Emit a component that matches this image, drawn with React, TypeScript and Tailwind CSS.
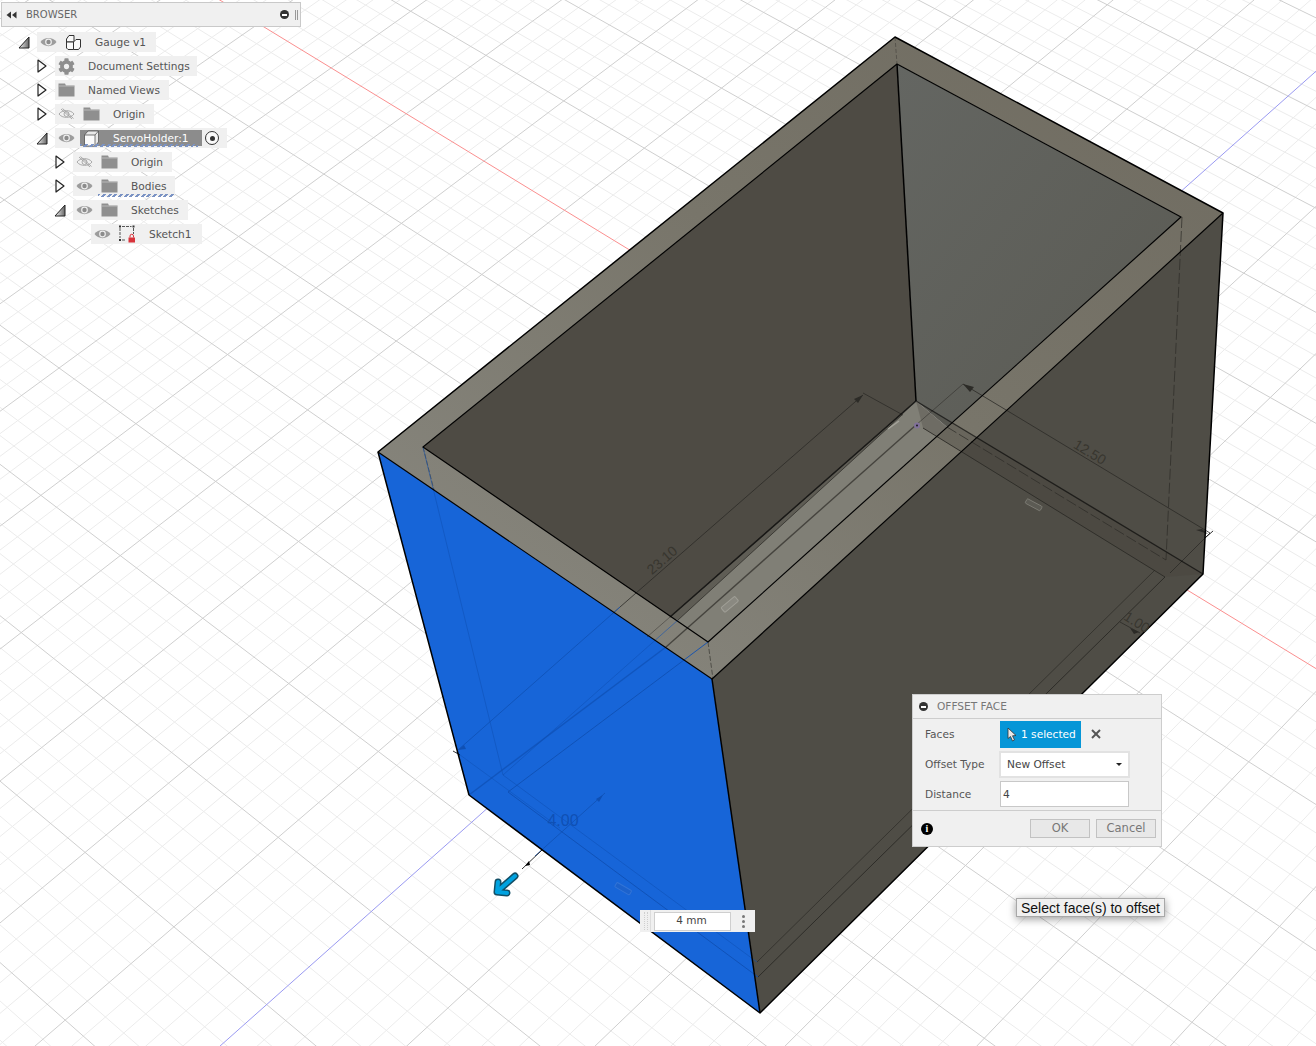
import React from "react";
import { FaCog } from "react-icons/fa";

// ground plane grid: homography fitted on the viewport (origin at the sketch origin)
const project = (s: number, t: number) => {
  const w = 1 - 0.0193 * s - 0.0185 * t;
  return {
    x: 917.6 + (95.1 * s - 80.95 * t) / w,
    y: 425.6 + (58 * s + 72 * t) / w,
  };
};

const RANGE = 14;
const gridLines = Array.from({ length: RANGE * 10 + 1 }, (_, n) => n - RANGE * 5);

const GroundGrid = () => (
  <g fill="none">
    {gridLines.filter((i) => i % 5 !== 0).map((i) => {
      const a = project(i / 5, -RANGE);
      const b = project(i / 5, RANGE);
      const c = project(-RANGE, i / 5);
      const d = project(RANGE, i / 5);
      return (
        <g key={i} stroke="#ececec" strokeWidth="1">
          <line x1={a.x} y1={a.y} x2={b.x} y2={b.y} />
          <line x1={c.x} y1={c.y} x2={d.x} y2={d.y} />
        </g>
      );
    })}
    {gridLines.filter((i) => i % 5 === 0 && i !== 0).map((i) => {
      const a = project(i / 5, -RANGE);
      const b = project(i / 5, RANGE);
      const c = project(-RANGE, i / 5);
      const d = project(RANGE, i / 5);
      return (
        <g key={i} stroke="#cfcfcf" strokeWidth="1">
          <line x1={a.x} y1={a.y} x2={b.x} y2={b.y} />
          <line x1={c.x} y1={c.y} x2={d.x} y2={d.y} />
        </g>
      );
    })}
    <line x1={project(-RANGE, 0).x} y1={project(-RANGE, 0).y} x2={project(RANGE, 0).x} y2={project(RANGE, 0).y} stroke="#fb8f8f" />
    <line x1={project(0, -RANGE).x} y1={project(0, -RANGE).y} x2={project(0, RANGE).x} y2={project(0, RANGE).y} stroke="#9a9af2" />
  </g>
);

const HolderModel = () => (
  <g>
    <defs>
      <linearGradient id="rim" x1="1" y1="0" x2="0" y2="1">
        <stop offset="0" stopColor="#6f6b60" />
        <stop offset="0.45" stopColor="#78756a" />
        <stop offset="1" stopColor="#8a8981" />
      </linearGradient>
      <linearGradient id="backWall" x1="0" y1="0" x2="1" y2="1">
        <stop offset="0" stopColor="#646662" />
        <stop offset="1" stopColor="#5a5a53" />
      </linearGradient>
    </defs>

    {/* outer faces */}
    <polygon points="712,679 1223,213 1203,574 760,1013" fill="#4f4d46" />
    <polygon points="378,452 712,679 760,1013 469,795" fill="#1765d8" />

    {/* inside of the box */}
    <polygon points="423,447 897,64 916,401 670,617" fill="#4e4b44" />
    <polygon points="897,64 1181,217 947,427 916,401" fill="url(#backWall)" />
    <polygon points="670,617 916,401 947,427 708,642" fill="#807f76" />
    <polygon points="670,617 678,620 902,415 916,401" fill="#5f5d55" />

    {/* rim */}
    <path d="M378,452 L895,37 L1223,213 L712,679 Z M423,447 L708,642 L1181,217 L897,64 Z" fill="url(#rim)" fillRule="evenodd" />

    {/* translucent strip of the far wall bottom */}
    <polygon points="916,401 1203,574 1165,577 923,428" fill="#45433c" fillOpacity="0.3" />

    {/* sketch and hidden edges on the right */}
    <g fill="none" stroke="#2c2b27" strokeWidth="1">
      <line x1="923" y1="428" x2="1165" y2="577" strokeOpacity="0.9" />
      <line x1="1165" y1="577" x2="758" y2="977" strokeOpacity="0.95" />
      <line x1="1155" y1="570" x2="757" y2="962" strokeOpacity="0.7" />
      <line x1="947" y1="427" x2="1166" y2="560" strokeDasharray="11 3" strokeOpacity="0.7" />
      <line x1="1182" y1="217" x2="1166" y2="560" strokeDasharray="11 3" strokeOpacity="0.7" />
      <line x1="895" y1="37" x2="897" y2="64" strokeDasharray="4 2" strokeOpacity="0.4" />
      <line x1="708" y1="642" x2="713" y2="679" strokeDasharray="5 2" strokeOpacity="0.6" />
      <line x1="423" y1="447" x2="434" y2="490" strokeDasharray="5 2" strokeOpacity="0.5" />
      <line x1="678" y1="620" x2="902" y2="415" strokeOpacity="0.75" />
      <line x1="666" y1="647" x2="916" y2="425" strokeOpacity="0.7" strokeWidth="1.4" />
      <line x1="647" y1="637" x2="670" y2="617" strokeOpacity="0.45" />
      <line x1="863" y1="395" x2="620" y2="607" strokeWidth="0.8" />
      <line x1="863" y1="393" x2="903" y2="415" strokeWidth="0.8" />
      <line x1="963" y1="384" x2="1210" y2="533" strokeWidth="0.8" />
      <line x1="963" y1="384" x2="916" y2="425" strokeWidth="0.8" strokeOpacity="0.7" />
      <line x1="1210" y1="533" x2="1170" y2="573" strokeWidth="0.8" />
      <line x1="1120" y1="622" x2="1140" y2="633" strokeWidth="0.8" />
      <line x1="620" y1="607" x2="612" y2="614" strokeWidth="0.8" strokeOpacity="0.5" />
    </g>
    <polygon points="863,395 854,399 858,403" fill="#2c2b27" />
    <polygon points="963,384 970,392 974,387" fill="#2c2b27" />
    <polygon points="1202,529 1208,534 1196,530" fill="#2c2b27" />
    <polygon points="1130,628 1139,632 1134,634" fill="#2c2b27" />

    {/* see-through lines on the selected face */}
    <g fill="none" stroke="#0f50b4" strokeWidth="1">
      <line x1="423" y1="447" x2="503" y2="775" strokeOpacity="0.55" />
      <line x1="503" y1="775" x2="757" y2="962" strokeOpacity="0.55" />
      <line x1="508" y1="792" x2="758" y2="977" strokeOpacity="0.9" />
      <line x1="469" y1="795" x2="666" y2="647" strokeWidth="1.4" strokeOpacity="0.75" />
      <line x1="503" y1="775" x2="678" y2="620" strokeOpacity="0.55" />
      <line x1="508" y1="792" x2="708" y2="642" strokeOpacity="0.9" />
      <line x1="620" y1="607" x2="458" y2="750" strokeWidth="0.8" />
      <line x1="456" y1="752" x2="560" y2="828" strokeWidth="0.8" strokeOpacity="0.6" />
      <line x1="605" y1="793" x2="535" y2="856" strokeWidth="0.8" />
    </g>
    <polygon points="458,750 464,745 466,749" fill="#0f50b4" />
    <polygon points="603,795 596,799 599,802" fill="#0f50b4" />

    {/* main edges */}
    <g fill="none" stroke="#000" strokeWidth="1.2" strokeLinejoin="round">
      <polyline points="469,795 378,452 895,37 1223,213 1203,574 760,1013 469,795" strokeWidth="1.5" />
      <polyline points="378,452 712,679 1223,213" />
      <line x1="712" y1="679" x2="760" y2="1013" strokeWidth="1.5" />
      <polygon points="423,447 708,642 1181,217 897,64" />
      <line x1="897" y1="64" x2="916" y2="401" strokeWidth="1.5" />
      <line x1="916" y1="401" x2="670" y2="617" strokeOpacity="0.8" strokeWidth="1.4" />
      <line x1="916" y1="401" x2="1203" y2="574" strokeOpacity="0.6" strokeWidth="1.4" />
    </g>

    {/* dimension stub and tick outside the body */}
    <line x1="522" y1="869" x2="542" y2="850" stroke="#000" strokeWidth="0.8" />
    <polygon points="529,861 525,866 530,865" fill="#000" />
    <line x1="453" y1="751" x2="460" y2="755" stroke="#000" strokeWidth="0.8" />
    <line x1="1205" y1="538" x2="1213" y2="531" stroke="#000" strokeWidth="0.8" />

    {/* constraint glyphs */}
    <rect x="721" y="602" width="18" height="6" rx="1" transform="rotate(-40 729 605)" fill="#8a8981" stroke="#a09f97" />
    <rect x="1025" y="502" width="17" height="5" rx="1" transform="rotate(28 1033 505)" fill="#5c5b54" stroke="#807f77" strokeWidth="0.8" />
    <rect x="615" y="886" width="17" height="5" rx="1" transform="rotate(30 623 888)" fill="#1c62cc" stroke="#3374d6" />
    <line x1="888" y1="429" x2="899" y2="421" stroke="#a5a49c" strokeWidth="1.5" />
    <circle cx="917" cy="425.5" r="3" fill="#80709a" />
    <circle cx="917" cy="425.5" r="1" fill="#1c1c22" />

    {/* offset arrow */}
    <g fill="none" strokeLinecap="round" strokeLinejoin="round">
      <path d="M515,876 L500,889 M498,882 L497,892 L507,893" stroke="#134f66" strokeWidth="7" />
      <path d="M515,876 L500,889 M498,882 L497,892 L507,893" stroke="#00a2e0" strokeWidth="4" />
    </g>

    <g fontFamily="'Liberation Sans', sans-serif" fontSize="14">
      <text x="662" y="565" textAnchor="middle" fill="#38362f" transform="rotate(-41 662 560)">23.10</text>
      <text x="1090" y="457" textAnchor="middle" fill="#38362f" transform="rotate(31 1090 452)">12.50</text>
      <text x="1137" y="627" textAnchor="middle" fill="#38362f" transform="rotate(32 1137 622)">1.00</text>
      <text x="563" y="826" textAnchor="middle" fill="#0f50b4" fontSize="16">4.00</text>
    </g>
  </g>
);

const Triangle = ({ open }: { open?: boolean }) => (
  <svg width="12" height="14" viewBox="0 0 12 14" className="shrink-0">
    <defs>
      <linearGradient id="corner" x1="0" y1="0" x2="1" y2="0">
        <stop offset="0" stopColor="#f2f2f2" />
        <stop offset="1" stopColor="#666" />
      </linearGradient>
    </defs>
    {open ? (
      <polygon points="1,13 11,2 11,13" fill="url(#corner)" stroke="#222" strokeWidth="1" />
    ) : (
      <polygon points="2,1 10,7 2,13" fill="#fafafa" stroke="#222" strokeWidth="1.2" strokeLinejoin="round" />
    )}
  </svg>
);

const Eye = ({ off }: { off?: boolean }) =>
  off ? (
    <svg width="17" height="12" viewBox="0 0 17 12" fill="none" stroke="#a2a2a2" strokeWidth="0.9">
      <path d="M1,6 C4,1.5 13,1.5 16,6 C13,10.5 4,10.5 1,6 Z" />
      <circle cx="8.5" cy="6" r="2.5" />
      <line x1="3" y1="1" x2="14" y2="11" />
      <line x1="4.5" y1="0.5" x2="15.5" y2="10.5" />
    </svg>
  ) : (
    <svg width="17" height="12" viewBox="0 0 17 12">
      <path d="M0.5,6 C4,0.5 13,0.5 16.5,6 C13,11.5 4,11.5 0.5,6 Z" fill="#9c9c9c" />
      <circle cx="8.5" cy="6" r="3.4" fill="#eee" />
      <circle cx="8.5" cy="6" r="2.2" fill="#8c8c8c" />
    </svg>
  );

const Folder = () => (
  <svg width="17" height="14" viewBox="0 0 17 14">
    <path d="M0.5,0.5 H7 L8,2.5 H16.5 V13.5 H0.5 Z" fill="#8f8f8f" />
    <line x1="0.5" y1="3" x2="16.5" y2="3" stroke="#c4c4c4" strokeWidth="0.8" />
  </svg>
);

const ComponentIcon = () => (
  <svg width="17" height="17" viewBox="0 0 17 17" fill="#fafafa" stroke="#333" strokeWidth="1" strokeLinejoin="round">
    <path d="M1.5,5 L4,1.5 H9 V8 H1.5 Z" />
    <path d="M1.5,8 H8.5 V15.5 H3 L1.5,14 Z" />
    <path d="M8.5,8 L11,5.5 H15.5 V13 L13.5,15.5 H8.5 Z" />
  </svg>
);

const CubeIcon = () => (
  <svg width="17" height="17" viewBox="0 0 17 17" stroke="#555" strokeWidth="0.8" strokeLinejoin="round">
    <path d="M1.5,5 L5,1 H15.5 V12 L12,16 H1.5 Z" fill="#e8e8e8" />
    <path d="M1.5,5 H12 V16 H1.5 Z" fill="#fafafa" />
    <path d="M12,5 L15.5,1" fill="none" />
  </svg>
);

const SketchIcon = () => (
  <svg width="18" height="18" viewBox="0 0 18 18" fill="none">
    <path d="M2,3 V13 M4,1.5 H13.5 M15.5,3 V9 M4,15 H8" stroke="#555" strokeWidth="1" strokeDasharray="3 1" />
    <rect x="1" y="0.5" width="2" height="2" fill="#333" />
    <rect x="14.5" y="0.5" width="2" height="2" fill="#333" />
    <rect x="1" y="14" width="2" height="2" fill="#333" />
    <rect x="10.5" y="12.5" width="6.5" height="5" fill="#d8333b" />
    <path d="M12,12.5 V11 A1.7,1.7 0 0 1 15.5,11 V12.5" stroke="#d8333b" strokeWidth="1" />
  </svg>
);

const Chip = ({ children, className }: { children: React.ReactNode; className: string }) => (
  <div className={`flex h-5 items-center bg-[#f0f0f0] ${className}`}>{children}</div>
);

const Slot = ({ children }: { children: React.ReactNode }) => (
  <span className="flex w-[22px] shrink-0 items-center justify-center">{children}</span>
);

const TreeRow = ({ indent, tri, chip, children }: { indent: string; tri?: "open" | "closed"; chip: string; children: React.ReactNode }) => (
  <div className={`relative flex h-6 items-center ${indent}`}>
    <span className="flex w-[19px] shrink-0 items-center justify-start">
      {tri && <Triangle open={tri === "open"} />}
    </span>
    <Chip className={chip}>{children}</Chip>
  </div>
);

const Label = ({ children, className = "ml-[11px] text-[#555]" }: { children: React.ReactNode; className?: string }) => (
  <span className={`${className} whitespace-nowrap text-[10.6px] leading-none`}>{children}</span>
);

const Squiggle = ({ className }: { className: string }) => (
  <span className={`absolute h-[3px] bg-[repeating-linear-gradient(135deg,#7b93c4_0,#7b93c4_2px,transparent_2px,transparent_4px)] ${className}`} />
);

const BrowserPanel = () => (
  <div className="absolute left-[1px] top-[2px] w-[300px] font-['DejaVu_Sans',sans-serif]">
    <div className="flex h-[25px] items-center border border-[#c9c9c9] bg-[#f0f0f0] pl-[4px] pr-[2px]">
      <svg width="11" height="8" viewBox="0 0 11 8" fill="#333">
        <polygon points="5,0.5 5,7.5 0.5,4" />
        <polygon points="10.5,0.5 10.5,7.5 6,4" />
      </svg>
      <span className="ml-[9px] text-[10px] leading-none text-[#666]">BROWSER</span>
      <span className="ml-auto flex h-[9px] w-[9px] items-center justify-center rounded-full bg-[#333]">
        <span className="h-[2px] w-[5px] bg-white" />
      </span>
      <span className="ml-[6px] h-[10px] w-[3px] border-x border-[#999]" />
    </div>
    <div className="-ml-[1px] mt-[3px] flex flex-col">
      <TreeRow indent="pl-[18px]" tri="open" chip="w-[119px]">
        <Slot><Eye /></Slot>
        <span className="ml-[3px]" />
        <Slot><ComponentIcon /></Slot>
        <Label>Gauge v1</Label>
      </TreeRow>
      <TreeRow indent="pl-[36px]" tri="closed" chip="w-[142px]">
        <Slot><FaCog className="h-[17px] w-[17px] text-[#8e8e8e]" /></Slot>
        <Label>Document Settings</Label>
      </TreeRow>
      <TreeRow indent="pl-[36px]" tri="closed" chip="w-[114px]">
        <Slot><Folder /></Slot>
        <Label>Named Views</Label>
      </TreeRow>
      <TreeRow indent="pl-[36px]" tri="closed" chip="w-[99px]">
        <Slot><Eye off /></Slot>
        <span className="ml-[3px]" />
        <Slot><Folder /></Slot>
        <Label>Origin</Label>
      </TreeRow>
      <TreeRow indent="pl-[36px]" tri="open" chip="w-[172px]">
        <Slot><Eye /></Slot>
        <span className="ml-[3px]" />
        <div className="relative flex h-4 w-[122px] shrink-0 items-center bg-[#8c8c8c]">
          <Slot><CubeIcon /></Slot>
          <Label className="ml-[11px] text-white">ServoHolder:1</Label>
          <Squiggle className="-bottom-[1px] left-0 w-[118px]" />
        </div>
        <span className="ml-[3px] flex h-[14px] w-[14px] items-center justify-center rounded-full border border-[#333] bg-[#fafafa]">
          <span className="h-[5px] w-[5px] rounded-full bg-[#333]" />
        </span>
      </TreeRow>
      <TreeRow indent="pl-[54px]" tri="closed" chip="w-[99px]">
        <Slot><Eye off /></Slot>
        <span className="ml-[3px]" />
        <Slot><Folder /></Slot>
        <Label>Origin</Label>
      </TreeRow>
      <TreeRow indent="pl-[54px]" tri="closed" chip="w-[102px]">
        <Slot><Eye /></Slot>
        <span className="ml-[3px]" />
        <Slot><Folder /></Slot>
        <Label>Bodies</Label>
        <Squiggle className="bottom-[1px] left-[98px] w-[76px]" />
      </TreeRow>
      <TreeRow indent="pl-[54px]" tri="open" chip="w-[115px]">
        <Slot><Eye /></Slot>
        <span className="ml-[3px]" />
        <Slot><Folder /></Slot>
        <Label>Sketches</Label>
      </TreeRow>
      <TreeRow indent="pl-[72px]" chip="w-[111px]">
        <Slot><Eye /></Slot>
        <span className="ml-[3px]" />
        <Slot><SketchIcon /></Slot>
        <Label>Sketch1</Label>
      </TreeRow>
    </div>
  </div>
);

const OffsetFaceDialog = () => (
  <div className="absolute left-[912px] top-[694px] w-[250px] border border-[#cdcdcd] bg-[#f0f0f0] font-['DejaVu_Sans',sans-serif] text-[10.6px] leading-none text-[#555]">
    <div className="flex h-[24px] items-center border-b border-[#cdcdcd] pl-[6px]">
      <span className="flex h-[9px] w-[9px] items-center justify-center rounded-full bg-[#333]">
        <span className="h-[2px] w-[5px] bg-white" />
      </span>
      <span className="ml-[9px] text-[#777]">OFFSET FACE</span>
    </div>
    <div className="flex h-[91px] flex-col pl-[12px] pt-[1px]">
      <div className="flex h-[28px] items-center">
        <span className="w-[75px]">Faces</span>
        <div className="flex h-[27px] w-[81px] items-center bg-[#0696d7] pl-[7px] text-white">
          <svg width="10" height="15" viewBox="0 0 10 15">
            <path d="M1,1 L1,11.5 L3.5,9.5 L5.5,14 L7.5,13 L5.5,8.8 L9,8.5 Z" fill="#e8e8e8" stroke="#333" strokeWidth="0.8" />
          </svg>
          <span className="ml-[4px]">1 selected</span>
        </div>
        <svg width="10" height="10" viewBox="0 0 10 10" className="ml-[10px]" stroke="#555" strokeWidth="2">
          <line x1="1" y1="1" x2="9" y2="9" />
          <line x1="9" y1="1" x2="1" y2="9" />
        </svg>
      </div>
      <div className="mt-[2px] flex h-[28px] items-center">
        <span className="w-[74px]">Offset Type</span>
        <div className="flex h-[27px] w-[131px] items-center border-2 border-[#e2e2e2] bg-white pl-[6px] pr-[6px]">
          <span className="text-[#444]">New Offset</span>
          <span className="ml-auto h-0 w-0 border-x-[3px] border-t-[3px] border-x-transparent border-t-[#222]" />
        </div>
      </div>
      <div className="mt-[2px] flex h-[28px] items-center">
        <span className="w-[75px]">Distance</span>
        <div className="flex h-[26px] w-[129px] items-center border border-[#c8c8c8] bg-white pl-[2px] text-[#444]">4</div>
      </div>
    </div>
    <div className="flex h-[36px] items-center border-t border-[#cdcdcd] pl-[8px] pr-[5px]">
      <span className="flex h-3 w-3 items-center justify-center rounded-full bg-black font-['Liberation_Serif',serif] text-[10px] font-bold text-white">i</span>
      <button className="ml-auto h-[19px] w-[60px] border border-[#c2c2c2] bg-[#e8e8e8] text-[11.5px] text-[#777]">OK</button>
      <button className="ml-[6px] h-[19px] w-[60px] border border-[#c2c2c2] bg-[#e8e8e8] text-[11.5px] text-[#777]">Cancel</button>
    </div>
  </div>
);

const ValueInput = () => (
  <div className="absolute left-[640px] top-[910px] flex h-[22px] w-[115px] items-center bg-[#f0f0f0] font-['DejaVu_Sans',sans-serif]">
    <span className="ml-[4px] h-[18px] w-[4px] border-x border-dotted border-[#cfcfcf]" />
    <span className="ml-[2px] h-full w-[1px] bg-[#dcdcdc]" />
    <div className="ml-[3px] flex h-[19px] w-[77px] items-center justify-center border border-[#cfcfcf] bg-white pr-[2px] text-[10.5px] text-[#444]">4 mm</div>
    <span className="ml-[11px] flex flex-col gap-[2px]">
      <span className="h-[3px] w-[3px] rounded-full bg-[#777]" />
      <span className="h-[3px] w-[3px] rounded-full bg-[#777]" />
      <span className="h-[3px] w-[3px] rounded-full bg-[#777]" />
    </span>
  </div>
);

const Tooltip = () => (
  <div className="absolute left-[1016px] top-[898px] flex h-[19px] w-[149px] items-center justify-center border border-[#a8a8a8] bg-[#f0f0f0] font-['Liberation_Sans',sans-serif] text-[14px] leading-none text-[#111] shadow-[0_2px_8px_rgba(0,0,0,0.4)]">
    Select face(s) to offset
  </div>
);

export default function App() {
  return (
    <div className="relative h-[1046px] w-[1316px] overflow-hidden bg-white">
      <svg width="1316" height="1046" viewBox="0 0 1316 1046" className="absolute left-0 top-0">
        <GroundGrid />
        <HolderModel />
      </svg>
      <BrowserPanel />
      <OffsetFaceDialog />
      <ValueInput />
      <Tooltip />
    </div>
  );
}
